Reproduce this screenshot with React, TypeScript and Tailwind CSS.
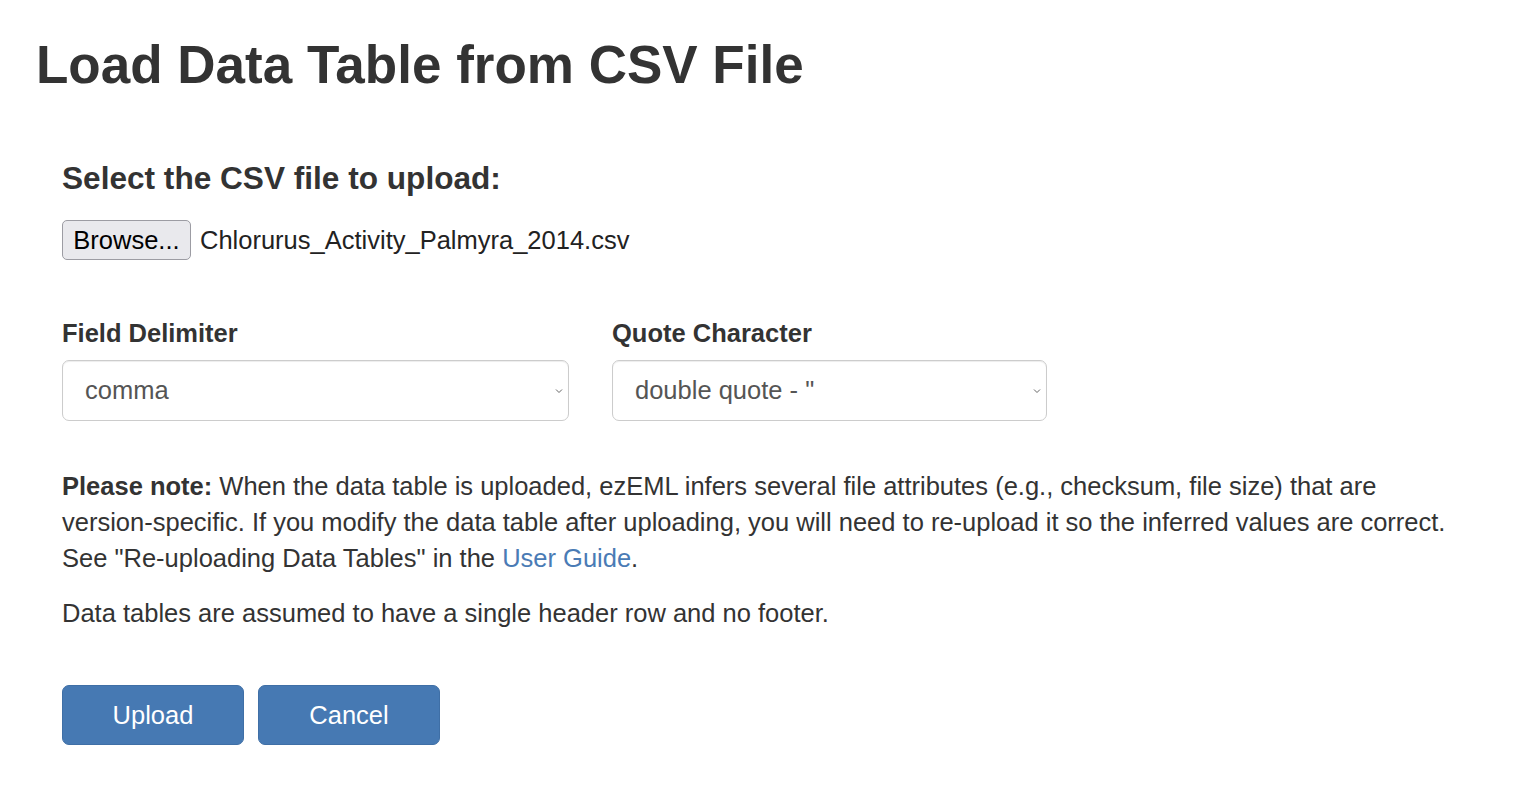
import React, { useState } from 'react';

const Chevron: React.FC = () => (
  <svg
    width="8"
    height="6"
    viewBox="0 0 8 6"
    className="pointer-events-none absolute right-[6px] top-1/2 -translate-y-1/2"
  >
    <path d="M1 1.5 L4 4.5 L7 1.5" fill="none" stroke="#666" strokeWidth="1" />
  </svg>
);

const App: React.FC = () => {
  const [delimiter, setDelimiter] = useState('comma');
  const [quote, setQuote] = useState('double');

  return (
    <div className="min-h-screen bg-white text-[#333] font-['Liberation_Sans',Arial,Helvetica,sans-serif]">
      <h1 className="pl-[36px] pt-[36px] text-[53px] font-bold leading-[1.1]">
        Load Data Table from CSV File
      </h1>

      <form className="w-[1480px] pl-[62px] flex flex-col" onSubmit={(e) => e.preventDefault()}>
        {/* Fichero */}
        <h4 className="mt-[67px] text-[31.6px] font-bold leading-[1.1]">
          Select the CSV file to upload:
        </h4>
        <div className="mt-[24px] flex items-center gap-[9px] text-[25.5px]">
          <button
            type="button"
            className="h-[40px] w-[129px] rounded-[5px] border border-[#9c9ca3] bg-[#e9e9ed] text-black"
          >
            Browse...
          </button>
          <span className="text-[#222]">Chlorurus_Activity_Palmyra_2014.csv</span>
        </div>

        {/* Opciones */}
        <div className="mt-[55px] flex gap-[43px]">
          <div className="flex flex-col">
            <label htmlFor="delimiter" className="text-[25.5px] font-bold leading-[36px]">
              Field Delimiter
            </label>
            <div className="relative mt-[9px] w-[507px]">
              <select
                id="delimiter"
                value={delimiter}
                onChange={(e) => setDelimiter(e.target.value)}
                className="h-[61px] w-full appearance-none rounded-[7px] border border-[#ccc] bg-white pl-[22px] text-[25.5px] text-[#555] shadow-[inset_0_1px_1px_rgba(0,0,0,0.075)]"
              >
                <option value="comma">comma</option>
                <option value="tab">tab</option>
                <option value="semicolon">semicolon</option>
              </select>
              <Chevron />
            </div>
          </div>
          <div className="flex flex-col">
            <label htmlFor="quote" className="text-[25.5px] font-bold leading-[36px]">
              Quote Character
            </label>
            <div className="relative mt-[9px] w-[435px]">
              <select
                id="quote"
                value={quote}
                onChange={(e) => setQuote(e.target.value)}
                className="h-[61px] w-full appearance-none rounded-[7px] border border-[#ccc] bg-white pl-[22px] text-[25.5px] text-[#555] shadow-[inset_0_1px_1px_rgba(0,0,0,0.075)]"
              >
                <option value="double">double quote - "</option>
                <option value="single">single quote - '</option>
              </select>
              <Chevron />
            </div>
          </div>
        </div>

        {/* Nota */}
        <p className="mt-[47px] text-[25.5px] leading-[36px]">
          <b>Please note:</b> When the data table is uploaded, ezEML infers several file attributes
          (e.g., checksum, file size) that are{' '}
          <span className="whitespace-nowrap">version-specific.</span> If you modify the data table
          after uploading, you will need to <span className="whitespace-nowrap">re-upload</span> it
          so the inferred values are correct. See{' '}
          <span className="whitespace-nowrap">"Re-uploading</span> Data Tables" in the{' '}
          <a href="#" className="text-[#4a7bb5]">
            User Guide
          </a>
          .
        </p>
        <p className="mt-[19px] text-[25.5px] leading-[36px]">
          Data tables are assumed to have a single header row and no footer.
        </p>

        {/* Botones */}
        <div className="mt-[54px] flex gap-[14px]">
          <button
            type="submit"
            className="h-[60px] w-[182px] rounded-[7px] border border-[#3f6fa6] bg-[#4679b3] text-[25.5px] text-white"
          >
            Upload
          </button>
          <button
            type="button"
            className="h-[60px] w-[182px] rounded-[7px] border border-[#3f6fa6] bg-[#4679b3] text-[25.5px] text-white"
          >
            Cancel
          </button>
        </div>
      </form>
    </div>
  );
};

export default App;
